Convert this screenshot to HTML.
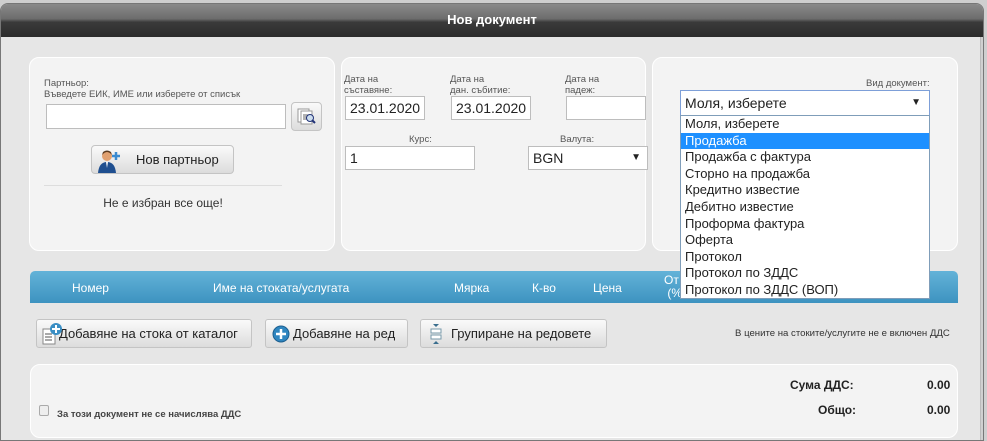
<!DOCTYPE html>
<html><head><meta charset="utf-8"><style>
*{box-sizing:border-box;margin:0;padding:0}
body{width:987px;height:441px;overflow:hidden;background:#cfcfcf;font-family:"Liberation Sans",sans-serif;position:relative}
.a{position:absolute}
#dlg{left:0;top:3px;width:984px;height:438px;background:#e6e6e6;border:1px solid #777;border-radius:8px 8px 0 0;overflow:hidden}
#hdr{left:0;top:0;width:100%;height:33px;background:linear-gradient(#8a8a8a,#6c6c6c 45%,#3a3a3a 55%,#2c2c2c);color:#fff;font-weight:bold;font-size:13px;text-align:center;line-height:32px}
#rs{left:979px;top:33px;width:5px;height:405px;background:#d0d0d0;border-left:1px solid #bbb}
.pn{background:#f3f3f3;border:1px solid #fff;border-radius:10px}
.lb{font-size:9.5px;color:#555;line-height:11px}
.in{background:#fff;border:1px solid #bdbdbd;font-size:14px;color:#222;padding-left:4px;line-height:22px;height:24px}
.btn{border:1px solid #c4c4c4;border-radius:3px;background:linear-gradient(#fafafa,#e8e8e8 60%,#dcdcdc);font-size:13px;color:#222}
.th{font-size:12px;color:#fff;top:281px}
.dd div{height:16.6px;line-height:16.6px;padding-left:4px;font-size:13px;color:#222}
</style></head><body>
<div id="dlg" class="a">
<div id="hdr" class="a">Нов документ</div>
<div id="rs" class="a"></div>
</div>
<div class="a pn" style="left:29px;top:57px;width:306px;height:194px"></div>
<div class="a lb" style="left:44px;top:78px">Партньор:<br>Въведете ЕИК, ИМЕ или изберете от списък</div>
<div class="a in" style="left:46px;top:104px;width:240px;height:25px"></div>
<div class="a btn" style="left:291px;top:102px;width:31px;height:29px;border-radius:4px">
<svg width="29" height="27" viewBox="0 0 29 27"><rect x="6" y="6" width="11" height="13" fill="#fff" stroke="#999"/><rect x="9" y="8" width="11" height="13" fill="#fff" stroke="#999"/><line x1="11" y1="12" x2="16" y2="12" stroke="#666"/><line x1="11" y1="14" x2="16" y2="14" stroke="#666"/><line x1="11" y1="16" x2="16" y2="16" stroke="#666"/><circle cx="18" cy="15" r="3.5" fill="#cde" stroke="#237"/><line x1="20" y1="17" x2="23" y2="20" stroke="#237" stroke-width="2"/></svg></div>
<div class="a btn" style="left:91px;top:145px;width:143px;height:29px;border-radius:4px;line-height:27px;padding-left:44px">Нов партньор
<svg class="a" style="left:5px;top:3px" width="26" height="24" viewBox="0 0 26 24"><circle cx="10" cy="7" r="5" fill="#e0a070"/><path d="M5 6 Q10 0 15 6 L14 3 Q10 0 6 3Z" fill="#5a3a20"/><path d="M1 24 Q2 13 10 13 Q18 13 19 24Z" fill="#1f4f90"/><path d="M9 13 L10 19 L11 13Z" fill="#fff"/><path d="M19 3v8M15 7h8" stroke="#3a8ad0" stroke-width="2.5"/></svg></div>
<div class="a" style="left:44px;top:185px;width:238px;height:1px;background:#ddd"></div>
<div class="a" style="left:44px;top:196px;width:238px;text-align:center;font-size:12px;color:#333">Не е избран все още!</div>
<div class="a pn" style="left:341px;top:57px;width:305px;height:194px"></div>
<div class="a lb" style="left:344px;top:74px">Дата на<br>съставяне:</div>
<div class="a lb" style="left:450px;top:74px">Дата на<br>дан. събитие:</div>
<div class="a lb" style="left:565px;top:74px">Дата на<br>падеж:</div>
<div class="a in" style="left:345px;top:96px;width:80px">23.01.2020</div>
<div class="a in" style="left:451px;top:96px;width:80px">23.01.2020</div>
<div class="a in" style="left:566px;top:96px;width:80px"></div>
<div class="a lb" style="left:409px;top:134px">Курс:</div>
<div class="a lb" style="left:560px;top:134px">Валута:</div>
<div class="a in" style="left:345px;top:146px;width:130px">1</div>
<div class="a in" style="left:528px;top:146px;width:120px">BGN<span class="a" style="right:6px;top:0;font-size:10px">▼</span></div>
<div class="a pn" style="left:652px;top:57px;width:306px;height:194px"></div>
<div class="a lb" style="left:866px;top:78px">Вид документ:</div>
<div class="a in" style="left:680px;top:90px;width:250px;height:26px;border:1px solid #7d9fd8;line-height:24px">Моля, изберете<span class="a" style="right:8px;top:0;font-size:10px">▼</span></div>
<div class="a" style="left:30px;top:271px;width:928px;height:32px;border-radius:5px 5px 0 0;background:linear-gradient(#63b3d8,#3d93c0)"></div>
<div class="a th" style="left:72px">Номер</div>
<div class="a th" style="left:213px">Име на стоката/услугата</div>
<div class="a th" style="left:454px">Мярка</div>
<div class="a th" style="left:532px">К-во</div>
<div class="a th" style="left:593px">Цена</div>
<div class="a" style="left:664px;top:274px;font-size:12px;color:#fff;line-height:13px">От<br>&nbsp;(%</div>
<div class="a dd" style="left:680px;top:115px;width:250px;height:184px;background:#fff;border:1px solid #7f9db9">
<div>Моля, изберете</div><div style="background:#1e90ff;color:#fff">Продажба</div><div>Продажба с фактура</div><div>Сторно на продажба</div><div>Кредитно известие</div><div>Дебитно известие</div><div>Проформа фактура</div><div>Оферта</div><div>Протокол</div><div>Протокол по ЗДДС</div><div>Протокол по ЗДДС (ВОП)</div></div>
<div class="a btn" style="left:36px;top:319px;width:216px;height:29px;line-height:27px;padding-left:22px">Добавяне на стока от каталог
<svg class="a" style="left:4px;top:2px" width="22" height="24"><rect x="2" y="7" width="12" height="15" fill="#fff" stroke="#888"/><line x1="4" y1="12" x2="11" y2="12" stroke="#555"/><line x1="4" y1="15" x2="11" y2="15" stroke="#555"/><line x1="4" y1="18" x2="11" y2="18" stroke="#555"/><circle cx="15" cy="7" r="6" fill="#3a8ec4"/><path d="M15 3v8M11 7h8" stroke="#fff" stroke-width="2"/></svg></div>
<div class="a btn" style="left:265px;top:319px;width:143px;height:29px;line-height:27px;padding-left:27px">Добавяне на ред
<svg class="a" style="left:5px;top:4px" width="20" height="20"><circle cx="10" cy="10" r="8" fill="#2f86c0" stroke="#1d5f8f"/><path d="M10 5v10M5 10h10" stroke="#fff" stroke-width="2.5"/></svg></div>
<div class="a btn" style="left:420px;top:319px;width:187px;height:29px;line-height:27px;padding-left:30px">Групиране на редовете
<svg class="a" style="left:8px;top:3px" width="14" height="22"><path d="M4 1l3 3 3-3z M4 21l3-3 3 3z" fill="#3a6e8e"/><rect x="2" y="6" width="10" height="4" fill="#fff" stroke="#79a"/><rect x="2" y="12" width="10" height="4" fill="#fff" stroke="#79a"/></svg></div>
<div class="a" style="left:735px;top:328px;font-size:9.6px;color:#333">В цените на стоките/услугите не е включен ДДС</div>
<div class="a pn" style="left:30px;top:364px;width:928px;height:74px"></div>
<div class="a" style="left:39px;top:405px;width:10px;height:11px;border:1px solid #aaa;border-radius:2px;background:#eee"></div>
<div class="a" style="left:57px;top:409px;font-size:9.5px;font-weight:bold;color:#444">За този документ не се начислява ДДС</div>
<div class="a" style="left:790px;top:378px;font-size:12px;font-weight:bold;color:#222">Сума ДДС:</div>
<div class="a" style="left:818px;top:403px;font-size:12px;font-weight:bold;color:#222">Общо:</div>
<div class="a" style="left:927px;top:378px;font-size:12px;font-weight:bold;color:#222">0.00</div>
<div class="a" style="left:927px;top:403px;font-size:12px;font-weight:bold;color:#222">0.00</div>
</body></html>
